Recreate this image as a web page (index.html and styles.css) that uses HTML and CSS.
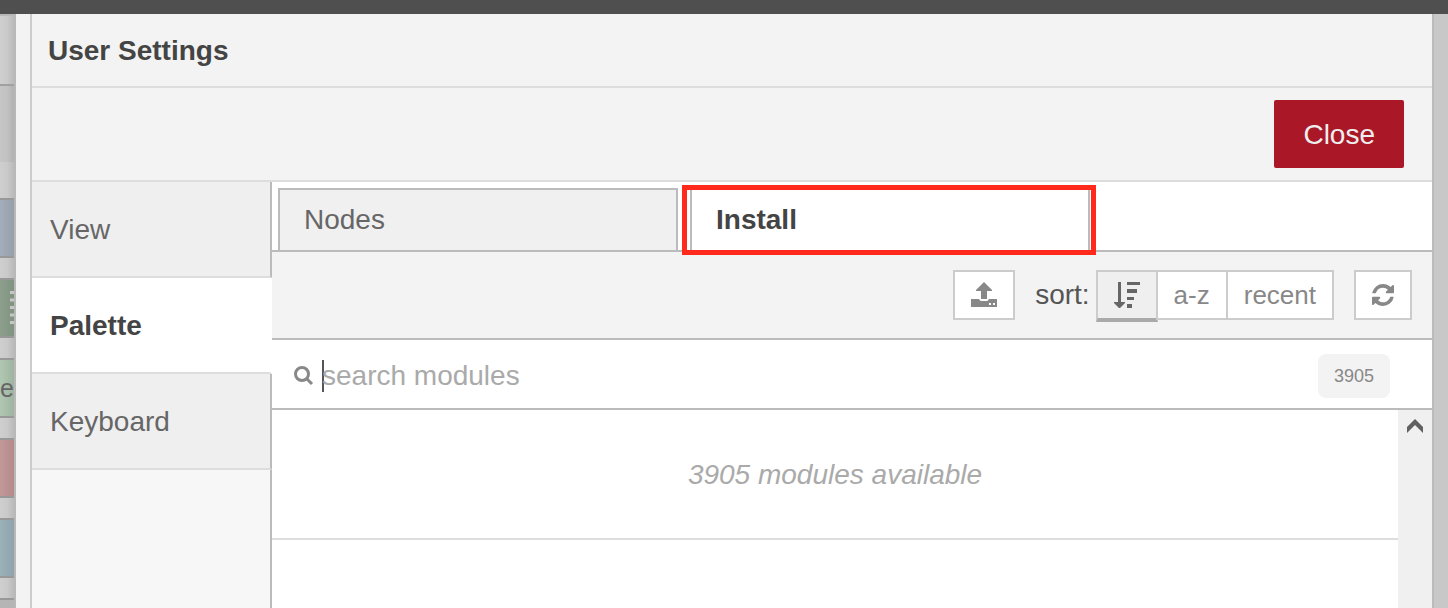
FILE: index.html
```html
<!DOCTYPE html>
<html lang="en">
<head>
  <meta charset="UTF-8">
  <meta name="viewport" content="width=device-width, initial-scale=1.0">
  <title>User Settings</title>
  <link rel="stylesheet" href="styles.css">
</head>
<body>

<div class="topbar"></div>

<div class="workspace">
  <div class="palette">
    <div class="palette-search"></div>
    <div class="palette-category"></div>
    <div class="palette-nodes">
      <div class="node node-blue"></div>
      <div class="node node-green">
        <svg width="4" height="34" viewBox="0 0 4 34"><path d="M0 1.5h4M0 9h4M0 16.5h4M0 24h4M0 31.5h4" stroke="#c5c9c5" stroke-width="3"/></svg>
      </div>
      <div class="node node-mint">e</div>
      <div class="node node-red"></div>
      <div class="node node-teal"></div>
      <div class="node node-grey"></div>
    </div>
  </div>

  <div class="tray-handle"></div>

  <div class="tray">
    <h1 class="tray-title">User Settings</h1>
    <div class="tray-toolbar">
      <button class="close-button" type="button">Close</button>
    </div>

    <div class="settings">
      <nav class="settings-tabs">
        <a href="#view">View</a>
        <a href="#palette" class="active">Palette</a>
        <a href="#keyboard">Keyboard</a>
      </nav>

      <div class="settings-content">
        <div class="module-tabs">
          <a href="#nodes" class="module-tab">Nodes</a>
          <div class="highlight">
            <a href="#install" class="module-tab active">Install</a>
          </div>
        </div>

        <div class="module-toolbar">
          <button class="tool-button upload" type="button" aria-label="Upload module">
            <svg width="26" height="26" viewBox="0 0 26 26" fill="#888">
              <path d="M13 0L21 8V9H16V17H10V9H5V8Z"/>
              <path fill-rule="evenodd" d="M0 17H8C9 19 10 19 11 19H15C16 19 17 19 18 17H26V25H0ZM18 21V23H20V21ZM22 21V23H24V21Z"/>
            </svg>
          </button>
          <span class="sort-label">sort:</span>
          <div class="sort-group">
            <button class="tool-button selected" type="button" aria-label="Sort by relevance">
              <svg width="26" height="26" viewBox="0 0 26 26" fill="#666">
                <path d="M4 0H7V20H11V21L6 26H5L0 21V20H4Z"/>
                <path d="M13 0H26V3H13ZM13 7H23V11H13ZM13 15H20V18H13ZM13 22H18V26H13Z"/>
              </svg>
            </button>
            <button class="tool-button" type="button">a-z</button>
            <button class="tool-button" type="button">recent</button>
          </div>
          <button class="tool-button refresh" type="button" aria-label="Refresh">
            <svg width="22" height="22" viewBox="0 0 1536 1536" fill="#888">
              <path d="M1511 928q0 5-1 7-64 268-268 434.500t-478 166.500q-146 0-282.500-55t-243.500-157l-129 129q-19 19-45 19t-45-19-19-45v-448q0-26 19-45t45-19h448q26 0 45 19t19 45-19 45l-137 137q71 66 161 102t187 36q134 0 250-65t186-179q11-17 53-117 8-23 30-23h192q13 0 22.500 9.500t9.500 22.500zm25-800v448q0 26-19 45t-45 19h-448q-26 0-45-19t-19-45 19-45l138-138q-148-137-349-137-134 0-250 65t-186 179q-11 17-53 117-8 23-30 23h-199q-13 0-22.500-9.500t-9.500-22.500v-7q65-268 270-434.500t480-166.500q146 0 284 55.500t245 156.500l130-129q19-19 45-19t45 19 19 45z"/>
            </svg>
          </button>
        </div>

        <div class="search">
          <svg width="20" height="20" viewBox="0 0 20 20" fill="none" stroke="#888">
            <circle cx="8" cy="8" r="6.5" stroke-width="3"/>
            <path d="M12.500 12.500L18 18" stroke-width="3"/>
          </svg>
          <input type="text" placeholder="search modules" aria-label="search modules">
          <span class="count">3905</span>
        </div>

        <div class="modules">
          <div class="module-list">
            <div class="module-message">3905 modules available</div>
          </div>
          <div class="scrollbar">
            <svg width="16" height="14" viewBox="0 0 16 14"><path d="M8 0L16 8V14L8 6L0 14V8Z" fill="#606060"/></svg>
          </div>
        </div>
      </div>
    </div>
  </div>

  <div class="sidebar-edge"></div>
</div>

</body>
</html>
```
FILE: styles.css
```css
* {
  box-sizing: border-box;
}
body {
  margin: 0;
  height: 100vh;
  display: flex;
  flex-direction: column;
  overflow: hidden;
  font-family: "Liberation Sans", Arial, sans-serif;
  font-size: 28px;
  line-height: 32px;
  color: #666;
}
a {
  color: inherit;
  text-decoration: none;
}
button,
input {
  font: inherit;
}
svg {
  display: block;
  flex: none;
}
.topbar {
  height: 14px;
  flex: none;
  background: #4f4f4f;
}
.workspace {
  flex: 1;
  display: flex;
  min-height: 0;
}

/* palette strip behind the tray */
.palette {
  width: 16px;
  flex: none;
  overflow: hidden;
  border-right: 2px solid #b8b8b8;
  background: linear-gradient(to right, #cfcfcf, #cacaca 50%, #b9b9b9);
}
.palette-search {
  height: 72px;
  border-top: 2px solid #b8b8b8;
  border-bottom: 2px solid #a0a0a0;
}
.palette-category {
  height: 76px;
  background: rgba(0, 0, 0, 0.04);
}
.palette-nodes {
  display: flex;
  flex-direction: column;
  gap: 20px;
  padding-top: 36px;
}
.node {
  height: 60px;
  flex: none;
  display: flex;
  align-items: center;
  justify-content: flex-end;
  border: solid #999;
  border-width: 2px 0;
  font-size: 25px;
  color: #666;
}
.node-blue {
  background: linear-gradient(to right, #a4aebb, #96a0ab);
}
.node-green {
  background: linear-gradient(to right, #8c9f8c, #819281);
}
.node-mint {
  background: linear-gradient(to right, #b0c8b2, #9fb4a0);
}
.node-red {
  background: linear-gradient(to right, #c39898, #b38b8b);
}
.node-teal {
  background: linear-gradient(to right, #9bb1b9, #8ea3ab);
}
.node-grey {
  background: #b5b5b5;
}

.tray-handle {
  width: 14px;
  flex: none;
  background: #f3f3f3;
}
.tray {
  flex: 1;
  min-width: 0;
  display: flex;
  flex-direction: column;
  border-left: 2px solid #ccc;
  border-right: 2px solid #bbb;
  background: #f3f3f3;
}
.sidebar-edge {
  width: 14px;
  flex: none;
  background: #c8c8c8;
}
.tray-title {
  margin: 0;
  padding: 21px 16px 19px;
  border-bottom: 2px solid #ddd;
  font-size: 28px;
  line-height: 32px;
  color: #444;
}
.tray-toolbar {
  display: flex;
  justify-content: flex-end;
  padding: 12px 28px;
  border-bottom: 2px solid #ddd;
}
.close-button {
  padding: 19px 29px 17px;
  border: none;
  border-radius: 2px;
  background: #aa1828;
  color: #eee;
}

.settings {
  flex: 1;
  display: flex;
  min-height: 0;
}
.settings-tabs {
  width: 240px;
  flex: none;
  background: linear-gradient(to left, #bbb 2px, #f7f7f7 2px);
}
.settings-tabs a {
  display: block;
  padding: 32px 18px 30px;
  border-right: 2px solid #bbb;
  border-bottom: 2px solid #ddd;
  background: #efefef;
}
.settings-tabs .active {
  border-right-color: #fff;
  background: #fff;
  color: #444;
  font-weight: bold;
}
.settings-content {
  flex: 1;
  min-width: 0;
  display: flex;
  flex-direction: column;
  background: #fff;
}
.module-tabs {
  height: 70px;
  flex: none;
  display: flex;
  align-items: flex-end;
  gap: 12px;
  padding-left: 6px;
  border-bottom: 2px solid #bbb;
}
.module-tab {
  display: block;
  width: 400px;
  height: 62px;
  padding: 14px 24px;
  border: 2px solid #bbb;
  border-bottom: none;
  background: #f0f0f0;
}
.module-tab.active {
  height: 64px;
  background: #fff;
  color: #444;
  font-weight: bold;
}
.highlight {
  position: relative;
  height: 62px;
}
.highlight::after {
  content: "";
  position: absolute;
  inset: -3px -6px -5px -8px;
  border: 5px solid #ff291c;
}

.module-toolbar {
  height: 88px;
  flex: none;
  display: flex;
  align-items: center;
  padding: 0 20px;
  justify-content: flex-end;
  border-bottom: 2px solid #bbb;
  background: #f3f3f3;
}
.tool-button {
  height: 50px;
  display: flex;
  align-items: center;
  justify-content: center;
  padding: 0 16px;
  border: 2px solid #ccc;
  background: #fff;
  color: #888;
}
.sort-label {
  margin: 0 6px 0 20px;
  color: #555;
}
.sort-group {
  display: flex;
  height: 50px;
}
.sort-group .tool-button {
  margin-left: -2px;
  font-size: 26px;
}
.sort-group .selected {
  height: 52px;
  margin-left: 0;
  border-bottom: 4px solid #aaa;
  background: #efefef;
}
.refresh {
  margin-left: 20px;
}

.search {
  height: 70px;
  flex: none;
  display: flex;
  align-items: center;
  padding: 4px 42px 0 22px;
  border-bottom: 2px solid #bbb;
}
.search input {
  flex: 1;
  min-width: 0;
  height: 32px;
  margin-left: 8px;
  padding: 0;
  border: none;
  outline: none;
  background: linear-gradient(#555, #555) left / 2px 100% no-repeat;
  color: #555;
}
.search input::placeholder {
  color: #aaa;
  opacity: 1;
}
.count {
  padding: 6px 16px;
  border-radius: 8px;
  background: #f3f3f3;
  font-size: 18px;
  color: #888;
}
.modules {
  flex: 1;
  display: flex;
  min-height: 0;
}
.module-list {
  flex: 1;
}
.module-message {
  padding: 49px 0 47px;
  border-bottom: 2px solid #ddd;
  text-align: center;
  font-style: italic;
  color: #aaa;
}
.scrollbar {
  width: 34px;
  flex: none;
  display: flex;
  justify-content: center;
  align-items: flex-start;
  padding-top: 9px;
  background: #f0f0f0;
}
```
